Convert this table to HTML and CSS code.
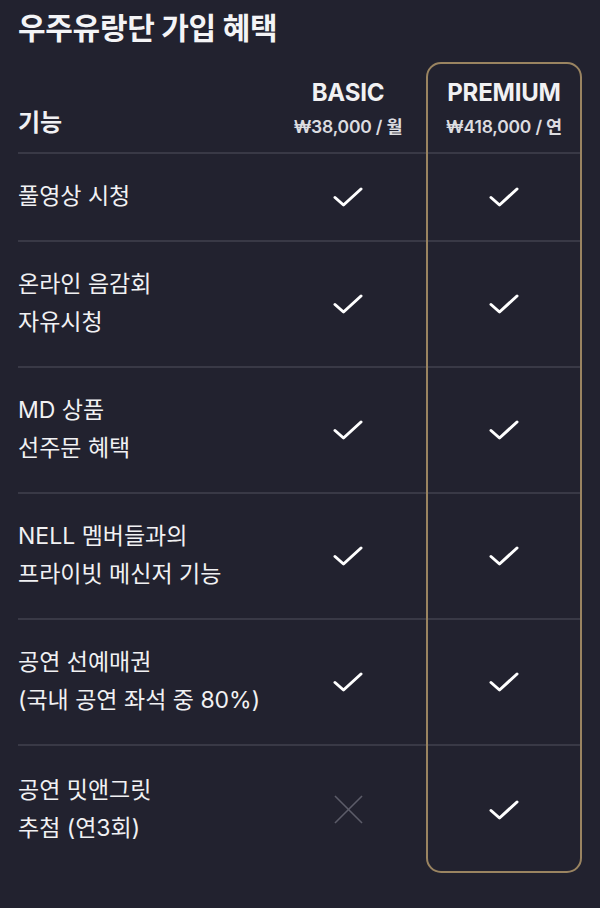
FILE: index.html
```html
<!DOCTYPE html>
<html lang="ko">
<head>
<meta charset="utf-8">
<title>우주유랑단 가입 혜택</title>
<link rel="stylesheet" href="styles.css">
</head>
<body>
<h1 class="title">우주유랑단 가입 혜택</h1>
<div class="table">
  <div class="cell head feat-head c1 r1"><span class="feat-label">기능</span></div>
  <div class="cell head plan c2 r1"><div class="plan-name">BASIC</div><div class="plan-price">₩38,000 / 월</div></div>
  <div class="cell head plan c3 r1"><div class="plan-name">PREMIUM</div><div class="plan-price">₩418,000 / 연</div></div>

  <div class="cell feat c1 r2">풀영상 시청</div>
  <div class="cell mark c2 r2"><svg class="check" viewBox="0 0 30 20"><path d="M2 10.5 L10.5 18 L28 2"/></svg></div>
  <div class="cell mark c3 r2"><svg class="check" viewBox="0 0 30 20"><path d="M2 10.5 L10.5 18 L28 2"/></svg></div>

  <div class="cell feat c1 r3">온라인 음감회<br>자유시청</div>
  <div class="cell mark c2 r3"><svg class="check" viewBox="0 0 30 20"><path d="M2 10.5 L10.5 18 L28 2"/></svg></div>
  <div class="cell mark c3 r3"><svg class="check" viewBox="0 0 30 20"><path d="M2 10.5 L10.5 18 L28 2"/></svg></div>

  <div class="cell feat c1 r4">MD 상품<br>선주문 혜택</div>
  <div class="cell mark c2 r4"><svg class="check" viewBox="0 0 30 20"><path d="M2 10.5 L10.5 18 L28 2"/></svg></div>
  <div class="cell mark c3 r4"><svg class="check" viewBox="0 0 30 20"><path d="M2 10.5 L10.5 18 L28 2"/></svg></div>

  <div class="cell feat c1 r5">NELL 멤버들과의<br>프라이빗 메신저 기능</div>
  <div class="cell mark c2 r5"><svg class="check" viewBox="0 0 30 20"><path d="M2 10.5 L10.5 18 L28 2"/></svg></div>
  <div class="cell mark c3 r5"><svg class="check" viewBox="0 0 30 20"><path d="M2 10.5 L10.5 18 L28 2"/></svg></div>

  <div class="cell feat c1 r6">공연 선예매권<br>(국내 공연 좌석 중 80%)</div>
  <div class="cell mark c2 r6"><svg class="check" viewBox="0 0 30 20"><path d="M2 10.5 L10.5 18 L28 2"/></svg></div>
  <div class="cell mark c3 r6"><svg class="check" viewBox="0 0 30 20"><path d="M2 10.5 L10.5 18 L28 2"/></svg></div>

  <div class="cell feat last c1 r7">공연 밋앤그릿<br>추첨 (연3회)</div>
  <div class="cell mark last c2 r7"><svg class="cross" viewBox="0 0 30 30"><path d="M1 1 L29 29 M29 1 L1 29"/></svg></div>
  <div class="cell mark last c3 r7"><svg class="check" viewBox="0 0 30 20"><path d="M2 10.5 L10.5 18 L28 2"/></svg></div>

  <div class="highlight"></div>
</div>
</body>
</html>
```
FILE: styles.css
```css
* { box-sizing: border-box; }
html, body {
  margin: 0;
  padding: 0;
  background: #22222f;
}
body {
  width: 600px;
  height: 908px;
  overflow: hidden;
  font-family: Inter, "Noto Sans CJK KR", sans-serif;
  color: #f1f1f3;
}
.title {
  margin: 0;
  padding: 9px 0 0 18px;
  height: 62px;
  font-size: 30px;
  line-height: 38px;
  font-weight: 700;
  letter-spacing: -0.3px;
  color: #f4f4f6;
}
.table {
  margin: 0 18px;
  display: grid;
  grid-template-columns: 1fr 156px 156px;
  grid-template-rows: 92px 88px repeat(4, 126px) 127px;
}
.c1 { grid-column: 1; }
.c2 { grid-column: 2; }
.c3 { grid-column: 3; }
.r1 { grid-row: 1; }
.r2 { grid-row: 2; }
.r3 { grid-row: 3; }
.r4 { grid-row: 4; }
.r5 { grid-row: 5; }
.r6 { grid-row: 6; }
.r7 { grid-row: 7; }
.cell {
  border-bottom: 2px solid #393946;
  display: flex;
  align-items: center;
}
.cell.last { border-bottom: none; }
.head { align-items: flex-end; padding-bottom: 14px; }
.feat-label {
  font-size: 24px;
  font-weight: 700;
  line-height: 30px;
}
.plan {
  flex-direction: column;
  justify-content: flex-end;
  align-items: center;
}
.plan-name {
  font-size: 24px;
  font-weight: 700;
  line-height: 32px;
  letter-spacing: -0.2px;
}
.plan-price {
  margin-top: 7px;
  font-size: 17.5px;
  font-weight: 600;
  line-height: 22px;
  color: #dcdce0;
  letter-spacing: -0.2px;
}
.feat {
  font-size: 23px;
  line-height: 38px;
  font-weight: 400;
  padding-bottom: 2px;
}
.mark { justify-content: center; }
.check {
  width: 30px;
  height: 20px;
  fill: none;
  stroke: #ffffff;
  stroke-width: 3;
  stroke-linecap: round;
  stroke-linejoin: round;
}
.cross {
  width: 29px;
  height: 29px;
  fill: none;
  stroke: #5c5c69;
  stroke-width: 1.6;
}
.highlight {
  grid-column: 3;
  grid-row: 1 / -1;
  border: 2px solid #9a8461;
  border-radius: 15px;
  pointer-events: none;
}
```
